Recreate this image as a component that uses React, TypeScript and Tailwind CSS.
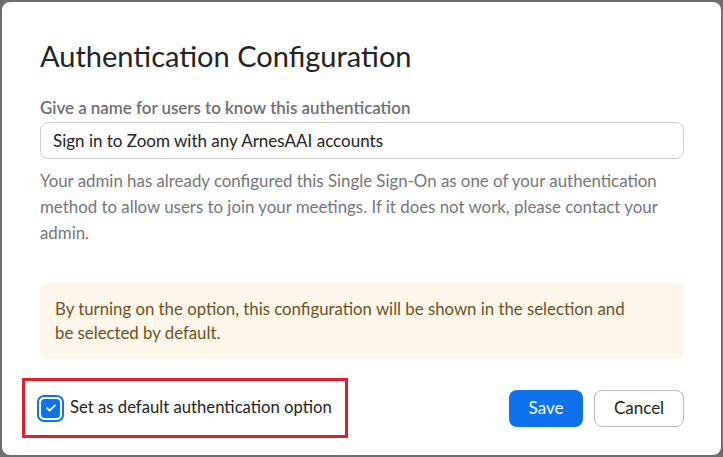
export default function App() {
  return (
    <div className="w-[723px] h-[457px] bg-[#6e6e6e] p-[2px] font-['Lato',sans-serif]">
      <div className="h-full bg-white rounded-[8px] flex flex-col pl-[38px] pr-[37px] pt-[34px]">
        <h1 className="text-[29px] leading-[40px] text-[#232323]">
          Authentication Configuration
        </h1>
        <label className="mt-[22px] text-[16.9px] leading-[20px] font-semibold text-[#6e6e72]">
          Give a name for users to know this authentication
        </label>
        <div className="mt-[4px] h-[37px] rounded-[8px] border border-[#cfcfd4] flex items-center px-[12px] text-[17px] text-[#232323]">
          Sign in to Zoom with any ArnesAAI accounts
        </div>
        <p className="mt-[9px] text-[16.85px] leading-[26px] text-[#76767a]">
          Your admin has already configured this Single Sign-On as one of your authentication
          method to allow users to join your meetings. If it does not work, please contact your
          admin.
        </p>
        <div className="mt-[37px] rounded-[8px] bg-[#fdf6eb] px-[15px] py-[14px] text-[16.8px] leading-[24px] text-[#6b5226]">
          By turning on the option, this configuration will be shown in the selection and
          <br />
          be selected by default.
        </div>
        <div className="mt-[19px] flex items-center justify-between">
          <div className="ml-[-18px] h-[60px] w-[326px] border-[3px] border-[#dc1f2b] flex items-center pl-[12px] gap-[6px]">
            <span className="w-[27px] h-[27px] rounded-[7px] border-2 border-[#0e72ed] p-[2px] flex">
              <span className="flex-1 rounded-[4px] bg-[#0e72ed] flex items-center justify-center">
                <svg width="12" height="10" viewBox="0 0 12 10" fill="none">
                  <path d="M2 5.2 4.6 7.6 10 2.4" stroke="white" strokeWidth="1.8" strokeLinecap="round" strokeLinejoin="round" />
                </svg>
              </span>
            </span>
            <span className="text-[16.7px] text-[#232323]">Set as default authentication option</span>
          </div>
          <div className="flex gap-[11px]">
            <button className="h-[37px] w-[74px] rounded-[8px] bg-[#0e72ed] text-white text-[17px]">
              Save
            </button>
            <button className="h-[37px] w-[90px] rounded-[8px] border border-[#babac4] bg-white text-[#232323] text-[17px]">
              Cancel
            </button>
          </div>
        </div>
      </div>
    </div>
  );
}
